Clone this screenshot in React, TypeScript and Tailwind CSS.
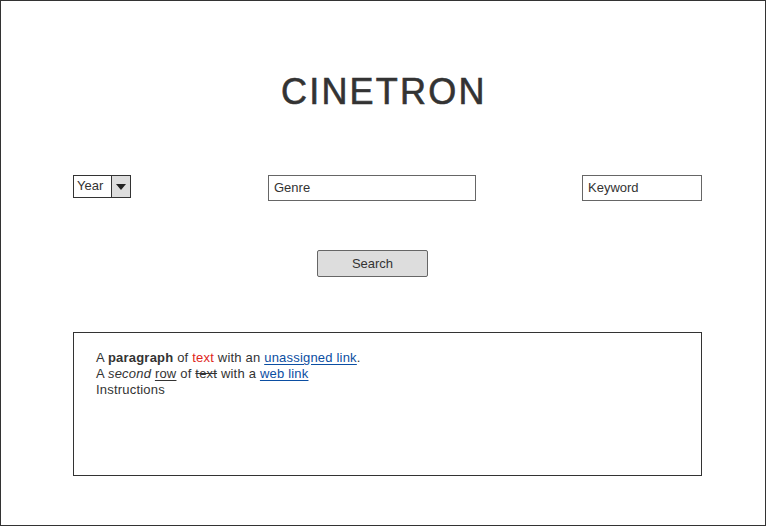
export default function App() {
  return (
    <div className="h-[526px] w-[766px] border border-[#333] bg-white font-['Liberation_Sans',sans-serif] text-[#333]">
      <div className="flex flex-col pl-[72px] pr-[63px]">
        <h1 className="mt-[73px] ml-[208px] text-[36px] leading-[36px] tracking-[2.2px] font-normal [-webkit-text-stroke:0.6px_#333]">CINETRON</h1>

        <div className="mt-[65px] flex items-start">
          <div className="flex h-[23px] w-[58px] border border-[#333] bg-white">
            <span className="flex-1 pl-[3px] text-[13px] leading-[20px]">Year</span>
            <span className="flex w-[19px] items-center justify-center border-l border-[#333] bg-[#ddd]">
              <svg width="10" height="6" viewBox="0 0 10 6">
                <path d="M0 0h10L5 6z" fill="#222" />
              </svg>
            </span>
          </div>
          <div className="ml-[137px] h-[26px] w-[208px] border border-[#666] pl-[5px] text-[13px] leading-[23px]">Genre</div>
          <div className="ml-auto h-[26px] w-[120px] border border-[#666] pl-[5px] text-[13px] leading-[23px]">Keyword</div>
        </div>

        <button
          type="button"
          className="mt-[49px] ml-[244px] h-[27px] w-[111px] rounded-[2px] border border-[#666] bg-[#ddd] text-[13px] leading-[22px] text-[#333]"
        >
          Search
        </button>

        <div className="mt-[55px] h-[144px] w-[629px] border border-[#333] pl-[22px] pt-[17px] text-[13px] leading-[16px] tracking-[0.2px]">
          <p>
            A <b>paragraph</b> of <span className="text-[#e0261b]">text</span> with an{" "}
            <span className="text-[#0b4ea2] underline underline-offset-2">unassigned link</span>.
          </p>
          <p>
            A <i>second</i> <span className="underline underline-offset-2">row</span> of <s>text</s> with a{" "}
            <span className="text-[#0b4ea2] underline underline-offset-2">web link</span>
          </p>
          <p>Instructions</p>
        </div>
      </div>
    </div>
  );
}
